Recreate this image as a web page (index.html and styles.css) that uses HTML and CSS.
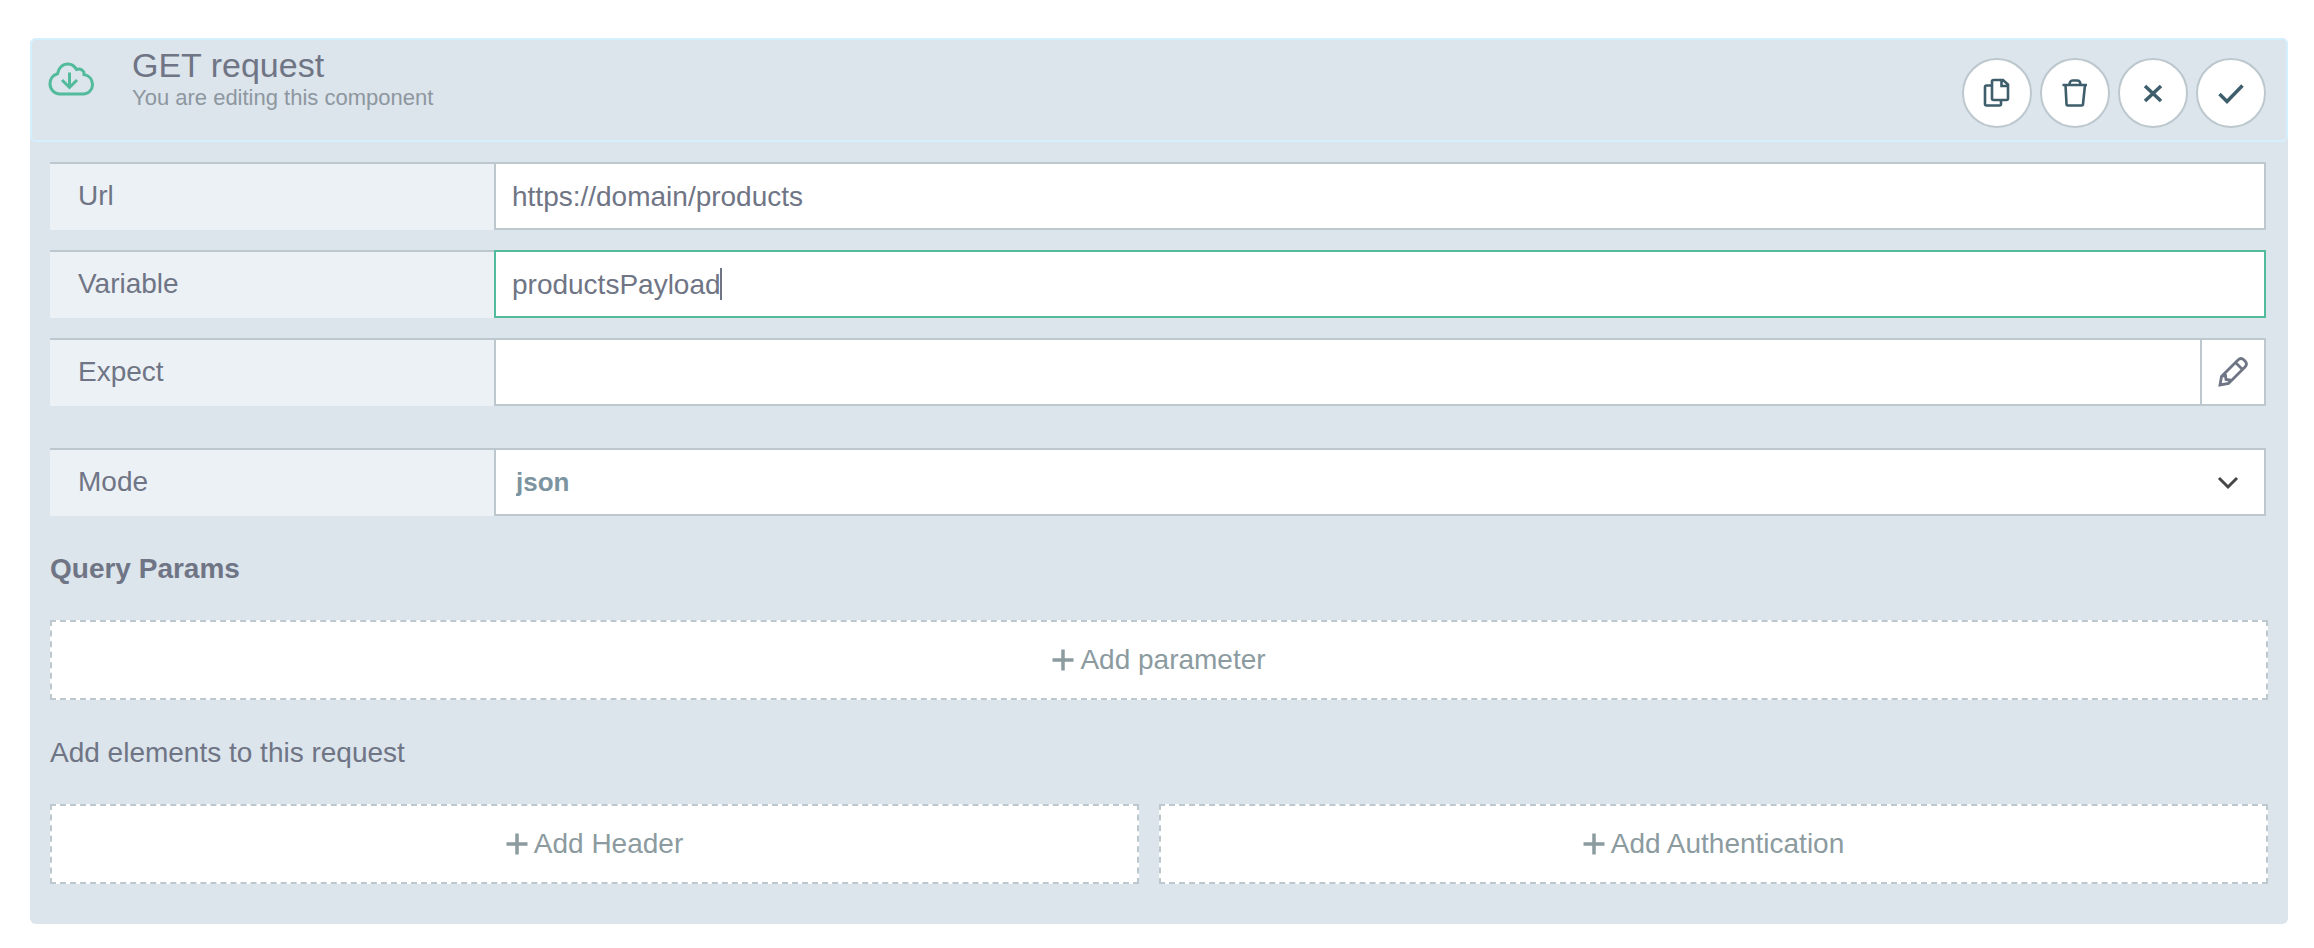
FILE: index.html
```html
<!DOCTYPE html>
<html lang="en">
<head>
<meta charset="utf-8">
<title>GET request</title>
<link rel="stylesheet" href="styles.css">
</head>
<body>
<main class="panel">
  <header class="panel-header">
    <svg class="cloud" viewBox="0 0 46 34" aria-hidden="true">
      <path d="M11.500 32H35A9.300 9.300 0 0 0 44.500 22.500C44.500 17.500 41 13.500 36 12.500C36.500 8.500 32.500 6 28.500 7.500C26.500 4 23.500 2 20 2C14.500 2 10.300 6 9.500 11.800C5 13 2 17 2 22C2 27.500 6.500 32 11.500 32Z"/>
      <path d="M21.500 10.500V25M14 18L21.500 25.500L29 18"/>
    </svg>
    <div class="heading">
      <h1 class="title">GET request</h1>
      <p class="subtitle">You are editing this component</p>
    </div>
    <div class="actions">
      <button class="round" type="button" aria-label="Duplicate">
        <svg viewBox="0 0 32 32"><path d="M11 8.500H5.500A1.500 1.500 0 0 0 4 10V27A1.500 1.500 0 0 0 5.500 28.500H18.500A1.500 1.500 0 0 0 20 27V23.500M12.500 3H22L27 7.500V21.500A1.500 1.500 0 0 1 25.500 23H12.500A1.500 1.500 0 0 1 11 21.500V4.500A1.500 1.500 0 0 1 12.500 3ZM20.500 3V9H27"/></svg>
      </button>
      <button class="round" type="button" aria-label="Delete">
        <svg viewBox="0 0 32 32"><path d="M3.500 8H28M10.500 8C10.500 5 11.500 3.500 13.500 3.500H18C20 3.500 21.500 5 21.500 8M6.500 8L7.500 27A1.500 1.500 0 0 0 9 28.500H22.500A1.500 1.500 0 0 0 24 27L26 8"/></svg>
      </button>
      <button class="round" type="button" aria-label="Cancel">
        <svg class="bold" viewBox="0 0 32 32"><path d="M8 9L24 24M24 9L8 24"/></svg>
      </button>
      <button class="round" type="button" aria-label="Save">
        <svg class="bold" viewBox="0 0 32 32"><path d="M4.500 17L12 24.500L27.500 8.500"/></svg>
      </button>
    </div>
  </header>

  <form class="form">
    <div class="row">
      <label class="label" for="url">Url</label>
      <input class="field" id="url" type="text" value="https://domain/products">
    </div>
    <div class="row">
      <label class="label" for="variable">Variable</label>
      <div class="focused">
        <input class="field active" id="variable" type="text" value="productsPayload">
        <span class="caret"></span>
      </div>
    </div>
    <div class="row">
      <label class="label" for="expect">Expect</label>
      <input class="field" id="expect" type="text">
      <button class="edit" type="button" aria-label="Edit">
        <svg viewBox="0 0 32 32"><path d="M3 29L4.500 20.500L21 4C23 2 25 2 27 4L28 5C30 7 30 9 28 11L11.500 27.500ZM18.500 6.500L25.500 13.500M5 20L8.500 19.500L9 23.500L12.500 24L12 27"/></svg>
      </button>
    </div>
    <div class="row mode">
      <label class="label" for="mode">Mode</label>
      <div class="select-wrap">
        <select class="field select" id="mode"><option>json</option></select>
        <svg class="chevron" viewBox="0 0 22 14" aria-hidden="true"><path d="M2 2L11 11L20 2"/></svg>
      </div>
    </div>

    <h2 class="section strong">Query Params</h2>
    <button class="add" type="button"><svg viewBox="0 0 22 22"><path d="M11 0.500V21.500M0.500 11H21.500"/></svg>Add parameter</button>

    <h2 class="section">Add elements to this request</h2>
    <div class="add-row">
      <button class="add" type="button"><svg viewBox="0 0 22 22"><path d="M11 0.500V21.500M0.500 11H21.500"/></svg>Add Header</button>
      <button class="add wide" type="button"><svg viewBox="0 0 22 22"><path d="M11 0.500V21.500M0.500 11H21.500"/></svg>Add Authentication</button>
    </div>
  </form>
</main>
</body>
</html>
```
FILE: styles.css
```css
* {
  box-sizing: border-box;
}

body {
  margin: 0;
  padding: 38px 26px 24px 30px;
  background: #fff;
  color: #6f7585;
  font-family: "Liberation Sans", Arial, sans-serif;
  font-size: 28px;
}

button,
input,
select {
  font: inherit;
  color: inherit;
  border-radius: 0;
  margin: 0;
}

svg {
  display: block;
  flex: none;
  fill: none;
  stroke: currentColor;
}

.panel {
  background: #dce4ec;
  border-radius: 6px;
}

.panel-header {
  display: flex;
  align-items: flex-start;
  height: 104px;
  padding: 0 20px 0 16px;
  border: 2px solid #d4effe;
  border-radius: 6px;
}

.cloud {
  width: 46px;
  height: 34px;
  margin-top: 22px;
  color: #51bb9b;
  stroke-width: 3;
}

.heading {
  flex: 1;
  margin-left: 38px;
  padding-top: 6px;
}

.title {
  margin: 0;
  font-size: 34px;
  font-weight: 400;
  line-height: 38px;
}

.subtitle {
  margin: 0;
  color: #8d979f;
  font-size: 22px;
  line-height: 28px;
}

.actions {
  display: flex;
  gap: 8px;
  padding-top: 18px;
}

.round {
  display: flex;
  align-items: center;
  justify-content: center;
  width: 70px;
  height: 70px;
  padding: 0;
  border: 2px solid #bcc8ce;
  border-radius: 50%;
  background: #fff;
  color: #3f5e6c;
}

.round svg {
  width: 32px;
  height: 32px;
  stroke-width: 2.6;
}

.round .bold {
  stroke-width: 3.5;
}

.form {
  padding: 20px 20px 40px;
}

.row {
  display: flex;
  height: 68px;
  margin: 0 2px 20px 0;
}

.row.mode {
  margin-top: 42px;
}

.label {
  width: 444px;
  flex: none;
  padding-left: 28px;
  border-top: 2px solid #bcc8ce;
  background: #ecf1f6;
  line-height: 64px;
}

.field {
  flex: 1;
  min-width: 0;
  width: 100%;
  height: 68px;
  padding: 2px 16px 0;
  border: 2px solid #bcc8ce;
  background: #fff;
  outline: 0;
}

.focused,
.select-wrap {
  position: relative;
  flex: 1;
}

.active {
  border-color: #51bb9b;
}

.caret {
  position: absolute;
  top: 18px;
  left: 226px;
  width: 2px;
  height: 32px;
  background: #6f7585;
}

.edit {
  display: flex;
  align-items: center;
  justify-content: center;
  width: 64px;
  border: 2px solid #bcc8ce;
  border-left: 0;
  background: #fff;
}

.edit svg {
  width: 32px;
  height: 32px;
  stroke-width: 2.8;
}

.select {
  appearance: none;
  padding: 0 20px;
  color: #7c949f;
  font-size: 26px;
  font-weight: 700;
}

.chevron {
  position: absolute;
  top: 28px;
  right: 27px;
  width: 22px;
  height: 14px;
  color: #474747;
  stroke-width: 3;
  pointer-events: none;
}

.section {
  margin: 37px 0 35px;
  font-size: 28px;
  font-weight: 400;
  line-height: 32px;
}

.strong {
  font-weight: 700;
}

.add {
  display: flex;
  align-items: center;
  justify-content: center;
  gap: 6px;
  width: 100%;
  height: 80px;
  padding: 0;
  border: 2px dashed #bcc8ce;
  background: #fff;
  color: #8c9b9f;
}

.add svg {
  width: 22px;
  height: 22px;
  stroke-width: 3.5;
}

.add-row {
  display: flex;
  gap: 20px;
}

.add-row .add {
  flex: 1 1 4px;
}

.add-row .wide {
  flex-basis: 24px;
}
```
